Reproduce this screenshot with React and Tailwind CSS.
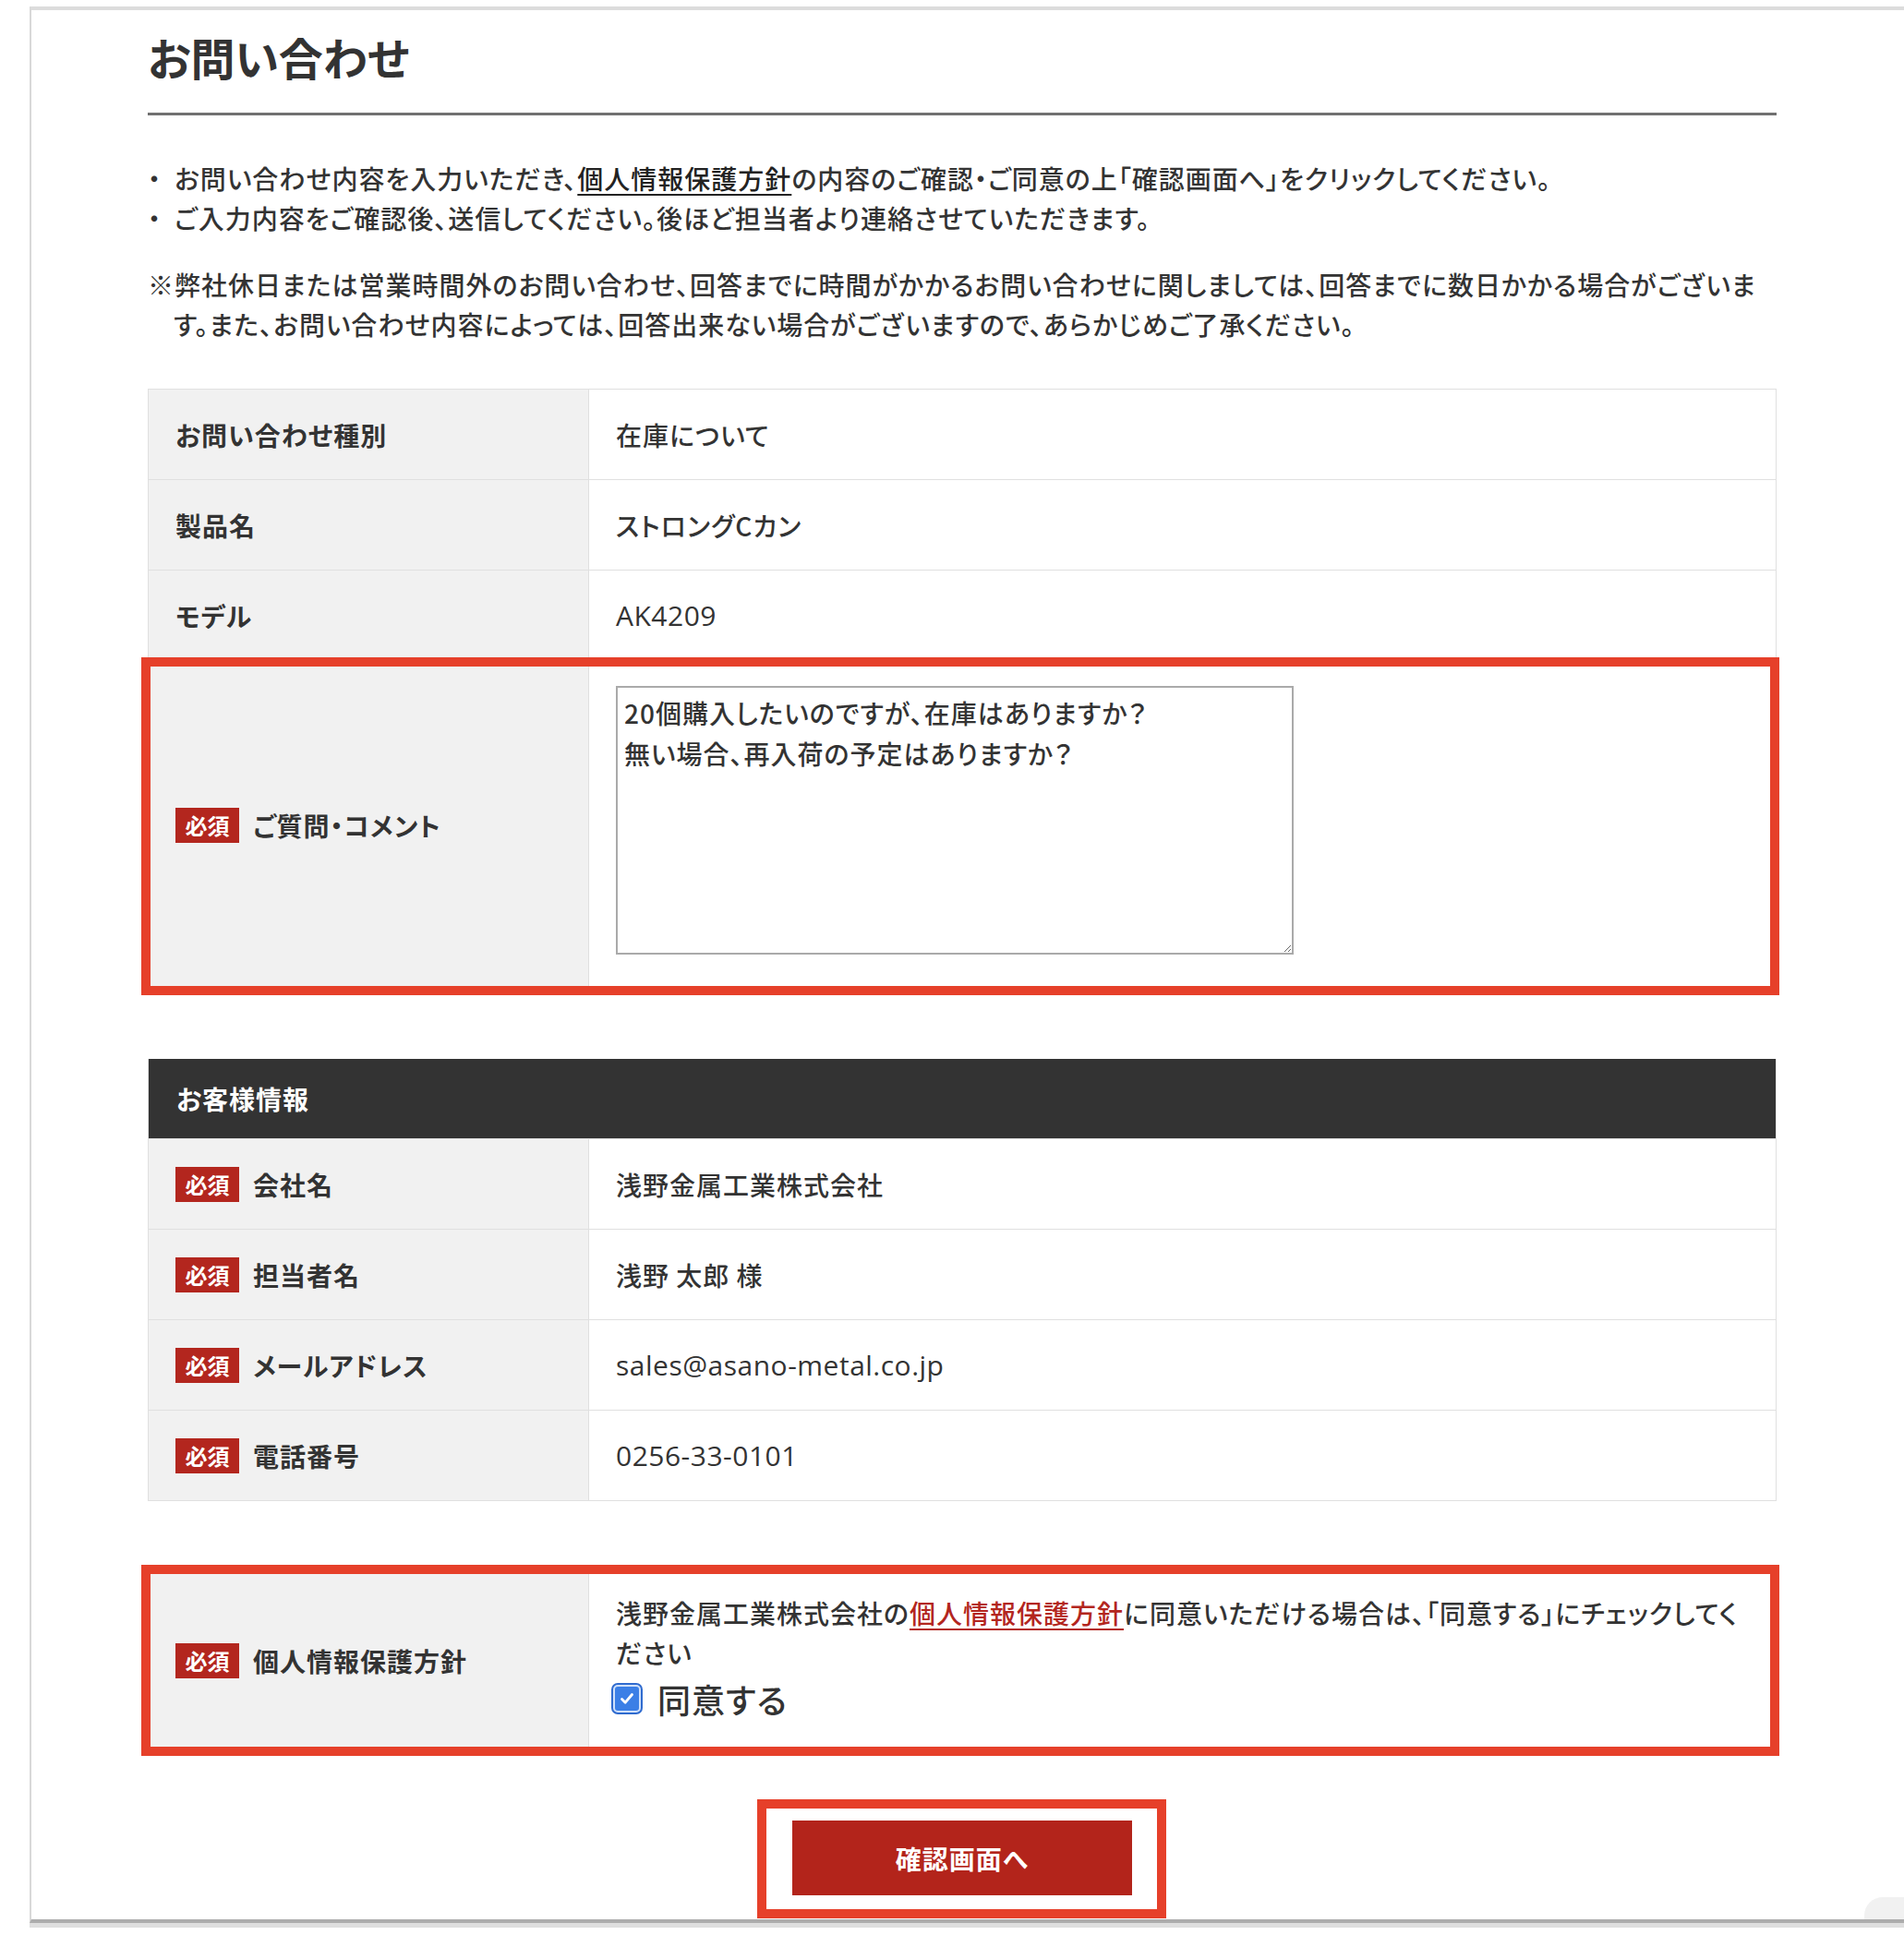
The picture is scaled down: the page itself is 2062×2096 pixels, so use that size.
import React from 'react';

const Badge = () => (
  <span className="inline-flex h-[38px] w-[69px] shrink-0 items-center justify-center bg-[#b3261e] text-[24px] font-bold leading-none tracking-normal text-white">
    必須
  </span>
);

const Row = ({ label, required, children, first, valueClass = 'items-center' }) => (
  <div className={`relative flex ${first ? '' : 'border-t border-[#e0e0e0]'}`}>
    <div className="flex w-[477px] shrink-0 items-center gap-[15px] border-r border-[#e0e0e0] bg-[#f1f1f1] px-[29px] font-semibold">
      {required && <Badge />}
      <span>{label}</span>
    </div>
    <div className={`flex min-h-[97px] flex-1 px-[29px] ${valueClass}`}>{children}</div>
  </div>
);

const Highlight = ({ className }) => (
  <div className={`pointer-events-none absolute border-[10px] border-[#e6402a] ${className}`} />
);

const Latin = ({ children }) => (
  <span className="font-['Open_Sans',sans-serif] text-[30px] font-normal tracking-[0.5px]">{children}</span>
);

const customer = [
  { label: '会社名', value: '浅野金属工業株式会社' },
  { label: '担当者名', value: '浅野 太郎 様' },
  { label: 'メールアドレス', value: <Latin>sales@asano-metal.co.jp</Latin> },
  { label: '電話番号', value: <Latin>0256-33-0101</Latin> },
];

export default function App() {
  return (
    <div className="min-h-[2096px] bg-white pt-[7px] font-['Noto_Sans_CJK_JP','Noto_Sans',sans-serif] text-[28px] font-medium tracking-[1px] text-[#333] [font-feature-settings:'palt']">
      <div className="relative ml-[32px] border-b-[4px] border-l-2 border-t-4 border-b-[#acacac] border-l-[#d8d8d8] border-t-[#dcdcdc] pb-[26px] pl-[126px] pt-[26px] shadow-[0_5px_0_#dedede]">
        <div className="w-[1764px]">
          <h1 className="border-b-[3px] border-[#707070] pb-[37px] text-[48px] font-bold leading-none tracking-normal">お問い合わせ</h1>

          <ul className="mt-[47px] leading-[43px]">
            <li className="flex">
              <span className="w-[29px] shrink-0">・</span>
              <span>
                お問い合わせ内容を入力いただき、
                <a className="text-[#222] underline underline-offset-[5px]">個人情報保護方針</a>
                の内容のご確認・ご同意の上「確認画面へ」をクリックしてください。
              </span>
            </li>
            <li className="flex">
              <span className="w-[29px] shrink-0">・</span>
              <span>ご入力内容をご確認後、送信してください。後ほど担当者より連絡させていただきます。</span>
            </li>
          </ul>

          <p className="mt-[29px] pl-[28px] indent-[-28px] leading-[43px]">
            ※弊社休日または営業時間外のお問い合わせ、回答までに時間がかかるお問い合わせに関しましては、回答までに数日かかる場合がございます。また、お問い合わせ内容によっては、回答出来ない場合がございますので、あらかじめご了承ください。
          </p>

          <div className="mt-[48px] border border-[#e0e0e0]">
            <Row label="お問い合わせ種別" first>在庫について</Row>
            <Row label="製品名">ストロングCカン</Row>
            <Row label="モデル"><Latin>AK4209</Latin></Row>
            <Row label="ご質問・コメント" required valueClass="items-start pt-[27px] pb-[38px]">
              <textarea
                readOnly
                defaultValue={'20個購入したいのですが、在庫はありますか？\n無い場合、再入荷の予定はありますか？'}
                className="h-[291px] w-[734px] border-2 border-[#aaa] bg-white px-[7px] py-[5px] text-[28px] font-medium leading-[44px] tracking-[1px] text-[#333] outline-none"
              />
              <Highlight className="-bottom-[6px] -left-[8px] -right-[4px] -top-[4px]" />
            </Row>
          </div>

          <div className="mt-[74px] border-x border-b border-[#e0e0e0]">
            <div className="flex h-[86px] items-center bg-[#333] px-[30px] font-bold text-white">お客様情報</div>
            {customer.map((c) => (
              <Row key={c.label} label={c.label} required>
                {c.value}
              </Row>
            ))}
          </div>

          <div className="mt-[73px] border border-[#e0e0e0]">
            <Row label="個人情報保護方針" required first valueClass="flex-col justify-center pt-[26px] pb-[31px]">
              <p className="leading-[43px]">
                浅野金属工業株式会社の
                <a className="text-[#b3261e] underline underline-offset-[5px]">個人情報保護方針</a>
                に同意いただける場合は、「同意する」にチェックしてください
              </p>
              <label className="-ml-[5px] mt-[2px] flex h-[52px] items-center gap-[16px]">
                <span className="flex h-[34px] w-[34px] items-center justify-center rounded-[7px] bg-[#2f6bcf] p-[2px]">
                  <span className="flex h-full w-full items-center justify-center rounded-[5px] border-2 border-[#cfe0fb] bg-[#3b7fe6]">
                    <svg viewBox="0 0 20 20" className="h-[20px] w-[20px]">
                      <path d="M4.5 10.5 L8.2 14.2 L15.5 5.5" fill="none" stroke="#fff" strokeWidth="2.8" strokeLinecap="round" strokeLinejoin="round" />
                    </svg>
                  </span>
                </span>
                <span className="text-[36px] font-medium leading-none">同意する</span>
              </label>
              <Highlight className="-bottom-[5px] -left-[8px] -right-[4px] -top-[5px]" />
            </Row>
          </div>

          <div className="mt-[74px] flex justify-center">
            <div className="relative">
              <button className="flex h-[81px] w-[368px] items-center justify-center bg-[#b3241b] text-[28px] font-bold text-white">
                確認画面へ
              </button>
              <Highlight className="-bottom-[25px] -left-[38px] -right-[37px] -top-[23px]" />
            </div>
          </div>
        </div>
        <div className="absolute bottom-0 right-0 h-[24px] w-[43px] rounded-tl-[20px] bg-[#f1f1f1]" />
      </div>
    </div>
  );
}
